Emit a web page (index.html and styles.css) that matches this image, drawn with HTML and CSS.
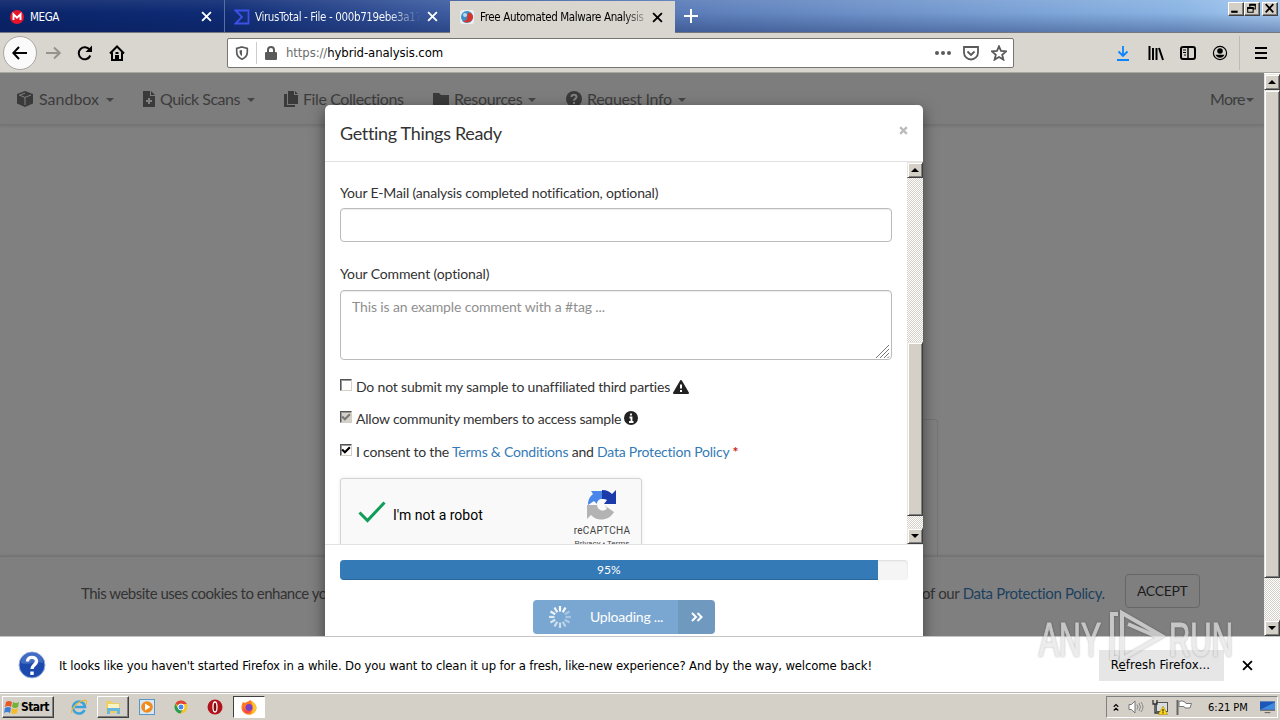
FILE: index.html
```
<!DOCTYPE html>
<html lang="en">
<head>
  <meta charset="UTF-8">
  <title>Free Automated Malware Analysis</title>
  <link rel="stylesheet" href="styles.css">
</head>
<body>

  <!-- Tabs -->
  <div class="tabbar">
    <div class="tab">
      <svg class="fav" viewBox="0 0 16 16"><circle cx="8" cy="8" r="7" fill="#e8142c"/><path d="M4.500 11V5.200L8 8.600l3.500-3.400V11" fill="none" stroke="#fff" stroke-width="1.900"/></svg>
      <span class="tab-title">MEGA</span>
      <svg class="tab-x" viewBox="0 0 10 10"><path d="M1 1l8 8M9 1L1 9"/></svg>
    </div>
    <div class="tab tab-vt">
      <svg class="fav" viewBox="0 0 16 16"><path d="M1.500 1.500h13v13h-13L8 8z" fill="none" stroke="#3d50e8" stroke-width="1.800"/></svg>
      <span class="tab-title fade-blue">VirusTotal - File - 000b719ebe3a17</span>
      <svg class="tab-x" viewBox="0 0 10 10"><path d="M1 1l8 8M9 1L1 9"/></svg>
    </div>
    <div class="tab active">
      <svg class="fav" viewBox="0 0 16 16"><rect x="1" y="1" width="14" height="14" rx="2" fill="#e9eef2"/><circle cx="8" cy="8" r="6" fill="#3f8fc4"/><path d="M9 4a4 4 0 0 1 5 4 6 6 0 0 1-10 4c3 0 5-2 4-4z" fill="#d8342c"/><circle cx="6" cy="6" r="2" fill="#b9def2"/></svg>
      <span class="tab-title fade-gray">Free Automated Malware Analysis</span>
      <svg class="tab-x" viewBox="0 0 10 10"><path d="M1 1l8 8M9 1L1 9"/></svg>
    </div>
    <svg class="plus" viewBox="0 0 14 14"><path d="M7 0v14M0 7h14"/></svg>
    <div class="win-btns">
      <div class="win-btn"><svg viewBox="0 0 12 10"><path d="M2 8h6" stroke-width="2"/></svg></div>
      <div class="win-btn"><svg viewBox="0 0 12 10"><path d="M4.500 4V1.500h5v4H8M2.500 4.500h5v4h-5z"/><path d="M4 1.500h6M2 4.500h6" stroke-width="2"/></svg></div>
      <div class="win-btn close"><svg viewBox="0 0 12 10"><path d="M2.500 1l7 7.500M9.500 1l-7 7.500" stroke-width="1.700"/></svg></div>
    </div>
  </div>

  <!-- Toolbar -->
  <div class="toolbar">
    <div class="back"><svg viewBox="0 0 16 16"><path d="M15 8H1.500M7 2L1.300 8 7 14"/></svg></div>
    <svg class="tool forward" viewBox="0 0 16 16"><path d="M1 8h13M9 2.500L14.700 8 9 13.500"/></svg>
    <svg class="tool" viewBox="0 0 16 16"><path d="M13.300 10.500a6 6 0 1 1-.5-5.500"/><path d="M15 .5V7H8.500z" fill="#000" stroke="none"/></svg>
    <svg class="tool home" viewBox="0 0 16 16"><path d="M1 8.500L8 1.500l7 7M3 7.500V15h10V7.500"/><path d="M7 15v-4h2v4M6.500 8h3"/></svg>
    <div class="urlbar">
      <svg class="shield" viewBox="0 0 14 14"><path d="M7 1l5.300 1.300V6c0 4-2.500 6-5.300 7.200C4.200 12 1.700 10 1.700 6V2.300z" fill="none" stroke="#5a5a5a" stroke-width="1.700"/><path d="M7 4v6C5 9 4.500 7.500 4.500 4.500z" fill="#5a5a5a"/></svg>
      <div class="url-sep"></div>
      <svg class="lock" viewBox="0 0 12 14"><path d="M3 7V4a3 3 0 0 1 6 0v3" fill="none" stroke="#5a5a5a" stroke-width="2"/><rect x="0" y="6" width="12" height="8" rx="1" fill="#5a5a5a"/></svg>
      <span class="url"><span>https://</span>hybrid-analysis.com</span>
      <svg class="dots" viewBox="0 0 16 4"><circle cx="2" cy="2" r="2"/><circle cx="8" cy="2" r="2"/><circle cx="14" cy="2" r="2"/></svg>
      <svg class="page-act" viewBox="0 0 16 16"><path d="M1 2h14v5.500a7 7 0 0 1-14 0z"/><path d="M4.500 6.500L8 10l3.500-3.500"/></svg>
      <svg class="page-act star" viewBox="0 0 16 16"><path d="M8 1.300l2 4.600 5 .5-3.800 3.300 1.200 4.900L8 12l-4.400 2.600 1.200-4.900L1 6.400l5-.5z"/></svg>
    </div>
    <div class="tools-right">
      <svg viewBox="0 0 16 16"><path d="M7 1v10M2.500 6.500L7 11l4.500-4.500M1 15h12" stroke="#0a84ff" stroke-width="1.800" fill="none"/></svg>
      <svg viewBox="0 0 16 16"><path d="M1.500 1v14M5 3v12M8.500 3v12M11 3l4 12" stroke="#000" stroke-width="2" fill="none"/></svg>
      <svg viewBox="0 0 16 16"><rect x="1" y="2" width="14" height="12" rx="2" stroke="#000" stroke-width="2" fill="none"/><path d="M8 2v12" stroke="#000" stroke-width="1.500"/><path d="M3 5h3M3 7.500h3M4 10h2" stroke="#000"/></svg>
      <svg viewBox="0 0 16 16"><circle cx="8" cy="8" r="6.600" fill="none" stroke="#000" stroke-width="1.200"/><circle cx="8" cy="6" r="2.800"/><path d="M3.500 9.800h9c-1 2-2.500 3-4.500 3s-3.500-1-4.500-3z"/></svg>
      <div class="tool-sep"></div>
      <svg class="burger" viewBox="0 0 12 12"><path d="M0 1h12M0 6h12M0 11h12" stroke="#000" stroke-width="2"/></svg>
    </div>
  </div>

  <!-- Page -->
  <div class="viewport">
    <div class="page">
      <nav class="site-nav">
        <div class="nav-item"><svg width="16" height="16" viewBox="0 0 16 16"><path d="M8 0l8 3v9.500L8 16l-8-3.500V3z"/><path d="M8 6.500V14M2 4l6 2.400L14 4M8 2.200L3 4" fill="none" stroke="#808080"/></svg><span class="nav-1">Sandbox</span><i class="caret"></i></div>
        <div class="nav-item"><svg width="12" height="16" viewBox="0 0 12 16"><path d="M0 0h7v5h5v11H0zM8 0l4 4H8z"/><path d="M6 7v6M3 10h6" stroke="#808080" stroke-width="2"/></svg><span class="nav-2">Quick Scans</span><i class="caret"></i></div>
        <div class="nav-item"><svg width="14" height="16" viewBox="0 0 14 16"><path d="M4 0h6v4h4v9H4zM11 0l3 3h-3zM0 3h3v11h8v2H0z"/></svg><span class="nav-3">File Collections</span></div>
        <div class="nav-item"><svg width="16" height="16" viewBox="0 0 16 16"><path d="M0 2h6l2 2h8v10H0z"/></svg><span class="nav-4">Resources</span><i class="caret"></i></div>
        <div class="nav-item"><svg width="16" height="16" viewBox="0 0 16 16"><circle cx="8" cy="8" r="8"/><path d="M5.500 6c0-3 5-3 5 0 0 1.500-2.500 1.800-2.500 3.800M8 11v2" fill="none" stroke="#808080" stroke-width="2"/></svg><span class="nav-5">Request Info</span><i class="caret"></i></div>
        <div class="nav-item more"><span>More</span><i class="caret"></i></div>
      </nav>
      <div class="panel"></div>
      <div class="cookies">
        <span class="cookie-text">This website uses cookies to enhance your</span>
        <span class="cookie-end">of our <a>Data Protection Policy.</a></span>
        <button class="accept">ACCEPT</button>
      </div>
    </div>
    <div class="scrollbar main-scroll">
      <div class="sb-btn"><i class="up"></i></div>
      <div class="sb-thumb"></div>
      <div class="sb-track"></div>
      <div class="sb-btn"><i class="down"></i></div>
    </div>

    <div class="modal">
      <div class="modal-header">
        <h4>Getting Things Ready</h4>
        <svg class="modal-close" viewBox="0 0 8 8"><path d="M1 1l6 6M7 1L1 7"/></svg>
      </div>
      <div class="modal-body">
        <form class="form">
          <label class="email-label">Your E-Mail (analysis completed notification, optional)</label>
          <div class="input"></div>
          <label>Your Comment (optional)</label>
          <div class="textarea">This is an example comment with a #tag ...
            <svg class="grip" viewBox="0 0 14 13"><path d="M0 13L13 0M4 13l9-9M8 13l5-5M11.500 13l1.500-1.500"/></svg>
          </div>
          <div class="check-row">
            <div class="box"></div><span class="t1">Do not submit my sample to unaffiliated third parties</span>
            <svg class="warn" viewBox="0 0 16 14"><path d="M8 1l7 12H1z" stroke="#222" stroke-width="2" stroke-linejoin="round"/><path d="M8 4.500v4M8 10v2" stroke="#fff" stroke-width="2"/></svg>
          </div>
          <div class="check-row second">
            <div class="box disabled"><svg viewBox="0 0 9 9"><path d="M1 4l2.500 2.500L8 2" stroke="#777"/></svg></div><span class="t2">Allow community members to access sample</span>
            <svg class="info" viewBox="0 0 14 14"><circle cx="7" cy="7" r="7"/><path d="M7 2.500v2M5.500 6.500h2V11M5 11h4.500" fill="none" stroke="#fff" stroke-width="1.800"/></svg>
          </div>
          <div class="check-row third">
            <div class="box"><svg viewBox="0 0 9 9"><path d="M1 4l2.500 2.500L8 2" stroke="#000"/></svg></div><span class="t3">I consent to the <a>Terms &amp; Conditions</a> and <a>Data Protection Policy</a> <b>*</b></span>
          </div>
          <div class="captcha">
            <svg class="tick" viewBox="0 0 28 22"><path d="M1.500 11.500l8 8L26.500 1.500"/></svg>
            <span class="robot">I'm not a robot</span>
            <div class="captcha-brand">
              <svg viewBox="0 0 32 32"><path d="M5 2h11v8c-3 0-5 2-5 5L8 12l-6 4c0-4 1-8 5-11z" fill="#4a86ea"/><path d="M16 1c5 0 8 2 10 4l4-4v14H18l3-4c-1-1-3-1-5-1z" fill="#1c3bab"/><path d="M1 16l10 0c0 5 7 8 10 3l-3-3 10 7c-5 9-17 10-23 3l-4 4z" fill="#b3b3b3"/></svg>
              <span class="rc">reCAPTCHA</span>
              <span class="pt">Privacy • Terms</span>
            </div>
          </div>
        </form>
        <div class="scrollbar modal-scroll">
          <div class="sb-btn"><i class="up"></i></div>
          <div class="sb-track"></div>
          <div class="sb-thumb"></div>
          <div class="sb-track end"></div>
          <div class="sb-btn"><i class="down"></i></div>
        </div>
      </div>
      <div class="modal-footer">
        <div class="progress"><div class="progress-bar" style="width: 94.8%"></div><span>95%</span></div>
        <div class="upload">
          <div class="upload-main">
            <svg viewBox="-12 -12 24 24"><g stroke="#fff" stroke-width="2.200"><path d="M0-5.500V-11"/><path d="M0-5.500V-11" transform="rotate(30)" opacity=".95"/><path d="M0-5.500V-11" transform="rotate(60)" opacity=".35"/><path d="M0-5.500V-11" transform="rotate(90)" opacity=".35"/><path d="M0-5.500V-11" transform="rotate(120)" opacity=".4"/><path d="M0-5.500V-11" transform="rotate(150)" opacity=".5"/><path d="M0-5.500V-11" transform="rotate(180)" opacity=".6"/><path d="M0-5.500V-11" transform="rotate(210)" opacity=".65"/><path d="M0-5.500V-11" transform="rotate(240)" opacity=".7"/><path d="M0-5.500V-11" transform="rotate(270)" opacity=".75"/><path d="M0-5.500V-11" transform="rotate(300)" opacity=".85"/><path d="M0-5.500V-11" transform="rotate(330)" opacity=".9"/></g></svg>
            <span>Uploading ...</span>
          </div>
          <div class="upload-next"><svg viewBox="0 0 12 10"><path d="M1 1l4 4-4 4M6.500 1l4 4-4 4"/></svg></div>
        </div>
      </div>
    </div>
  </div>

  <!-- Notification bar -->
  <div class="notice">
    <svg class="q" viewBox="0 0 28 28"><circle cx="14" cy="14" r="13" fill="#1c49ad" stroke="#9fb4dd"/><path d="M3 12a11 11 0 0 1 22 0c-6-3-15 3-22 0z" fill="#5b83d0" opacity=".6"/><path d="M9.500 10.500c0-5.500 9-5.500 9 0 0 3-4.500 3.500-4.500 7.500M14 20.500v3.500" fill="none" stroke="#fff" stroke-width="3.400"/></svg>
    <span class="notice-text">It looks like you haven't started Firefox in a while. Do you want to clean it up for a fresh, like-new experience? And by the way, welcome back!</span>
    <button class="refresh">R<u>e</u>fresh Firefox...</button>
    <svg class="notice-x" viewBox="0 0 10 10"><path d="M1 1l8 8M9 1L1 9"/></svg>
  </div>

  <!-- Taskbar -->
  <div class="taskbar">
    <div class="start">
      <svg viewBox="0 0 16 16"><path d="M2 3q3-2 6 0L7 8Q4 6 1 8z" fill="#e8572a"/><path d="M9 3q3 2 6 0l-1 5q-3 2-6 0z" fill="#6fb33a"/><path d="M1 9q3-2 6 0l-1 5Q3 12 0 14z" fill="#3e7fd6"/><path d="M8 9q3 2 6 0l-1 5q-3 2-6 0z" fill="#f4bd2c"/></svg>
      <span>Start</span>
    </div>
    <div class="task"><svg viewBox="0 0 16 16"><path d="M13.500 11A6 6 0 1 1 14 8H4" fill="none" stroke="#39a2dd" stroke-width="2.600"/><path d="M1 14C-1 10 9 0 15 1.500q1.500 1 0 4" fill="none" stroke="#e9b93c" stroke-width="1.300"/></svg></div>
    <div class="task raised"><svg viewBox="0 0 16 16"><path d="M1 2h6l1 2h7v10H1z" fill="#eccf68"/><path d="M3 5h11v5H3z" fill="#fbf3c4"/><path d="M2 9h13v6h-3v-3H5v3H2z" fill="#69b7df"/></svg></div>
    <div class="task"><svg viewBox="0 0 16 16"><rect x=".5" y=".5" width="15" height="15" fill="#d6e8f5" stroke="#5996c6"/><circle cx="8" cy="8" r="5.800" fill="#f28a1c"/><path d="M6 4.500l5.500 3.500L6 11.500z" fill="#fff"/></svg></div>
    <div class="task"><svg viewBox="0 0 16 16"><circle cx="8" cy="8" r="6.500" fill="#f5c62c"/><path d="M8 8L2.400 4.700A6.500 6.500 0 0 1 13.800 5H8z" fill="#dd4336"/><path d="M2.400 4.700A6.500 6.500 0 0 0 7.500 14.500L10 10 5.200 9.500z" fill="#289d58"/><circle cx="8" cy="8" r="3" fill="#4a87ea" stroke="#fff"/></svg></div>
    <div class="task"><svg viewBox="0 0 16 16"><circle cx="8" cy="8" r="7.500" fill="#b3121a"/><ellipse cx="8" cy="8" rx="2" ry="5" fill="#7c0b10" stroke="#fff" stroke-width="1.300"/></svg></div>
    <div class="task pressed"><svg viewBox="0 0 16 16"><path d="M2 3l2 1c2-2 4-1 5-3 3 2 6 4 6.500 7.500a7.500 7 0 0 1-15 .5C.5 6 1 5 2 3z" fill="#ff7a22"/><path d="M10 2c4 2 6 5 5 9q-2 4-6 5 5-5 1-14z" fill="#ffc52e"/><circle cx="8" cy="8.500" r="3.500" fill="#7a40c8"/><path d="M2 8c2 5 6 5 8 3-1 5-8 4-8-3z" fill="#f33f52"/></svg></div>
    <div class="tray">
      <svg class="chev" viewBox="0 0 8 10"><path d="M1 4l3-3 3 3M1 9l3-3 3 3"/></svg>
      <svg viewBox="0 0 16 16"><path d="M1 5.500h2.500L7 2v12l-3.500-3.500H1z" fill="#fff" stroke="#777"/><path d="M9 5.500q2 2.500 0 5M11 4q3 4 0 8M13 3q4 5 0 10" fill="none" stroke="#888"/></svg>
      <svg viewBox="0 0 16 16"><rect x="4.500" y="3.500" width="11" height="9" fill="#d8dde0" stroke="#555"/><path d="M1 1v4h4V1M3 5v9h4" fill="none" stroke="#333" stroke-width="1.300"/><path d="M11 7l4.500 8.500h-9z" fill="#ffd91c" stroke="#a98a00" stroke-width=".6"/><path d="M11 10v2.500M11 13.200v1.200" stroke="#000"/></svg>
      <svg viewBox="0 0 16 16"><path d="M1.500 1v15" stroke="#666" stroke-width="2"/><path d="M3 2.500q3-1.500 6 .5l1 1.500h5.500L14 9H9L8 7.500H3z" fill="#fff" stroke="#777"/></svg>
      <span>6:21 PM</span>
      <svg class="desk" viewBox="0 0 16 14"><path d="M0 1h16v9H0z" fill="#1d57b5"/><path d="M0 10l16-8v8z" fill="#3f8be0"/><path d="M0 10.500h16M5 13h6" stroke="#555"/></svg>
    </div>
  </div>

  <!-- Watermark -->
  <svg class="watermark" viewBox="0 0 200 60">
    <g class="wm-text"><text x="1" y="47" textLength="62" lengthAdjust="spacingAndGlyphs">ANY</text><text x="131" y="47" textLength="64" lengthAdjust="spacingAndGlyphs">RUN</text></g>
    <path class="wm-line" d="M80 5h-6v44h6M84 4l40 23-40 23zM90 15l32 14"/>
  </svg>

</body>
</html>
```
FILE: styles.css
```
* {
  box-sizing: border-box;
}

body {
  margin: 0;
  width: 1280px;
  height: 720px;
  overflow: hidden;
  position: relative;
  display: flex;
  flex-direction: column;
  font-family: "DejaVu Sans Condensed", "DejaVu Sans", sans-serif;
  font-stretch: condensed;
  font-size: 11px;
  color: #000;
}

svg {
  display: block;
  flex-shrink: 0;
}

span {
  white-space: nowrap;
}

/* Tabs */
.tabbar {
  height: 33px;
  display: flex;
  background: linear-gradient(rgba(255,255,255,.08), rgba(0,0,0,0) 40%, rgba(10,25,80,.32)), linear-gradient(90deg, #0a246a 0, #0e2b74 220px, #3c5b9f 440px, #5c7db9 690px, #8ab4e3 1180px, #a6caf0);
  border-bottom: 1px solid #74777f;
}

.tab {
  width: 225px;
  display: flex;
  align-items: center;
  padding: 1px 12px 0 9px;
  color: #fff;
  border-right: 1px solid #58709f;
}

.tab-vt {
  border-right: none;
}

.fav {
  width: 16px;
  height: 16px;
  margin-right: 5px;
}

.tab-title {
  font-size: 11.5px;
  letter-spacing: -0.37px;
  width: 167px;
  overflow: hidden;
}

.fade-blue {
  background: linear-gradient(90deg, #fff 80%, #2c4b91);
  background-clip: text;
  color: transparent;
}

.fade-gray {
  background: linear-gradient(90deg, #000 86%, #c0bdb7);
  background-clip: text;
  color: transparent;
}

.tab-x {
  width: 11px;
  height: 11px;
  margin-left: auto;
  fill: none;
  stroke: currentColor;
  stroke-width: 1.7;
}

.active {
  height: 33px;
  margin-top: 1px;
  background: #d9d6cf;
  color: #000;
  border: none;
  padding-bottom: 2px;
}

.plus {
  width: 14px;
  height: 14px;
  margin: 9px 0 0 9px;
  stroke: #fff;
  stroke-width: 2;
}

.win-btns {
  display: flex;
  margin: 2px 2px 0 auto;
}

.win-btn {
  width: 16px;
  height: 14px;
  background: #d4d0c8;
  border: 1px solid;
  border-color: #fff #404040 #404040 #fff;
  box-shadow: inset -1px -1px #808080;
}

.win-btn svg {
  width: 13px;
  height: 11px;
  fill: none;
  stroke: #000;
}

.close {
  margin-left: 2px;
}

/* Toolbar */
.toolbar {
  height: 40px;
  display: flex;
  align-items: center;
  background: #d9d6cf;
  padding-left: 3px;
  border-bottom: 1px solid #aaa7a0;
}

.back {
  width: 34px;
  height: 34px;
  border: 1px solid #a9a6a1;
  border-radius: 50%;
  background: #fafafa;
  display: flex;
  align-items: center;
  justify-content: center;
}

.back svg,
.tool {
  width: 16px;
  height: 16px;
  fill: none;
  stroke: #000;
  stroke-width: 2;
}

.tool {
  margin-left: 16px;
}

.forward {
  margin-left: 8px;
  stroke: #96938e;
}

.urlbar {
  width: 787px;
  height: 30px;
  margin-left: 102px;
  background: #fff;
  border: 1px solid #77756f;
  border-radius: 2px;
  display: flex;
  align-items: center;
  padding: 0 6px 0 7px;
}

.shield {
  width: 14px;
  height: 14px;
}

.url-sep {
  width: 1px;
  height: 22px;
  background: #ccc;
  margin: 0 8px 0 7px;
}

.lock {
  width: 12px;
  height: 14px;
}

.url {
  margin-left: 9px;
  font-size: 13px;
  letter-spacing: -0.09px;
}

.url span {
  color: #6d6d6d;
}

.dots {
  width: 16px;
  height: 4px;
  margin-left: auto;
  fill: #5a5a5a;
}

.page-act {
  width: 16px;
  height: 16px;
  margin-left: 12px;
  fill: none;
  stroke: #5a5a5a;
  stroke-width: 1.8;
}

.tools-right {
  flex: 1;
  display: flex;
  align-items: center;
  gap: 16px;
  padding-left: 102px;
}

.tools-right svg {
  width: 16px;
  height: 16px;
}

.tool-sep {
  width: 1px;
  height: 34px;
  background: #bebab4;
  margin-left: -5px;
}

.tools-right .burger {
  width: 12px;
  height: 12px;
  margin-left: -1px;
}

/* Page */
.viewport {
  height: 563px;
  position: relative;
  display: flex;
  overflow: hidden;
  font-family: Lato, sans-serif;
  font-stretch: normal;
  font-size: 14px;
}

.page {
  width: 1264px;
  background: #808080;
  display: flex;
  flex-direction: column;
  color: #333;
}

.site-nav {
  height: 52px;
  display: grid;
  grid-template-columns: 126px 141px 149px 133px 644px 1fr;
  padding-left: 17px;
  background: #7d7d7d;
  border-bottom: 1px solid #747474;
  box-shadow: 0 1px 3px rgba(0,0,0,.12);
  font-size: 16px;
}

.nav-item {
  display: flex;
  align-items: center;
  color: #3c3c3c;
}

.nav-item svg {
  fill: #3a3a3a;
  margin-right: 5px;
}

.nav-item .nav-1 {
  margin-left: 1px;
  letter-spacing: 0;
}

.nav-2 {
  letter-spacing: -0.5px;
}

.nav-3 {
  letter-spacing: -0.4px;
}

.nav-4,
.nav-5 {
  letter-spacing: -0.32px;
}

.more {
  letter-spacing: -0.7px;
}

.caret {
  border: 4px solid transparent;
  border-top-color: #444;
  border-bottom: none;
  margin: 3px 0 0 7px;
}

.nav-4 + .caret,
.nav-5 + .caret {
  margin-left: 6px;
}

.more .caret {
  margin-left: 1px;
}

.panel {
  width: 598px;
  height: 137px;
  margin: 294px 0 0 340px;
  border: 1px solid #747474;
  border-bottom: none;
  border-radius: 4px 4px 0 0;
}

.cookies {
  flex: 1;
  display: flex;
  align-items: flex-start;
  background: #7f7f7f;
  border-top: 1px solid #737373;
  box-shadow: 0 -1px 2px rgba(0,0,0,.1);
  padding: 17px 0 0 81px;
  font-size: 15px;
}

.cookie-text {
  width: 700px;
  padding-top: 10px;
  letter-spacing: -0.5px;
}

.cookie-end {
  padding-top: 10px;
  margin-left: 141px;
  letter-spacing: -0.34px;
}

.cookie-end a {
  color: #1c3f5f;
}

.accept {
  width: 75px;
  height: 34px;
  margin-left: 20px;
  padding: 0 0 2px;
  border: 1px solid #666;
  border-radius: 4px;
  background: transparent;
  font: 14px Lato, sans-serif;
  letter-spacing: -0.3px;
  color: #1c1c1c;
}

/* Classic scrollbars */
.scrollbar {
  width: 16px;
  display: flex;
  flex-direction: column;
}

.sb-btn,
.sb-thumb {
  background: #d4d0c8;
  border: 1px solid;
  border-color: #e8e5df #404040 #404040 #e8e5df;
  box-shadow: inset 1px 1px #fff, inset -1px -1px #808080;
}

.sb-btn {
  height: 16px;
  display: flex;
  align-items: center;
  justify-content: center;
}

.up {
  border: 4px solid transparent;
  border-bottom-color: #000;
  border-top: none;
}

.down {
  border: 4px solid transparent;
  border-top-color: #000;
  border-bottom: none;
}

.sb-track {
  flex: 1;
  background: repeating-conic-gradient(#fff 0 25%, #d4d0c8 0 50%) 0 0 / 2px 2px;
}

.main-scroll {
  padding-top: 1px;
}

.main-scroll .sb-thumb {
  height: 488px;
}

/* Modal */
.modal {
  position: absolute;
  left: 325px;
  top: 32px;
  width: 598px;
  height: 560px;
  background: #fff;
  border-radius: 5px;
  box-shadow: 0 5px 15px rgba(0,0,0,.5);
  color: #333;
}

.modal-header {
  height: 57px;
  display: flex;
  justify-content: space-between;
  padding: 17px 15px 0;
  border-bottom: 1px solid #e2e2e2;
}

.modal-header h4 {
  margin: 0;
  font-size: 18px;
  font-weight: normal;
  line-height: 22px;
  letter-spacing: -0.33px;
}

.modal-close {
  width: 9px;
  height: 9px;
  margin-top: 4px;
  stroke: #bbb;
  stroke-width: 2;
}

.modal-body {
  height: 383px;
  display: flex;
  overflow: hidden;
  border-bottom: 1px solid #e2e2e2;
}

.form {
  width: 582px;
  padding: 21px 15px 0;
}

.form label {
  display: block;
  line-height: 20px;
  letter-spacing: -0.13px;
}

.form .email-label {
  letter-spacing: -0.18px;
}

.input {
  height: 34px;
  margin: 5px 0 22px;
  border: 1px solid #bbb;
  border-radius: 4px;
  box-shadow: inset 0 1px 1px rgba(0,0,0,.075);
}

.textarea {
  position: relative;
  height: 70px;
  margin-top: 6px;
  padding: 6px 11px;
  border: 1px solid #bbb;
  border-radius: 4px;
  box-shadow: inset 0 1px 1px rgba(0,0,0,.075);
  line-height: 20px;
  letter-spacing: -0.13px;
  color: #8f8f8f;
}

.grip {
  position: absolute;
  right: 1px;
  bottom: 1px;
  width: 14px;
  height: 13px;
  stroke: #777;
}

.check-row {
  height: 20px;
  margin-top: 17px;
  display: flex;
  align-items: center;
  line-height: 20px;
}

.second {
  margin-top: 12px;
}

.third {
  margin-top: 13px;
}

.box {
  width: 12px;
  height: 12px;
  margin: 0 4px 4px 0;
  border: 1px solid;
  border-color: #555 #d4d0c8 #d4d0c8 #555;
  box-shadow: inset 1px 1px #999;
}

.box svg {
  width: 10px;
  height: 10px;
  fill: none;
  stroke-width: 2;
}

.disabled {
  background: #d4d0c8;
}

.t1 {
  letter-spacing: -0.18px;
}

.t2 {
  letter-spacing: -0.2px;
}

.t3 {
  letter-spacing: -0.21px;
}

.t3 a {
  color: #337ab7;
}

.t3 b {
  color: #d02020;
}

.warn {
  width: 16px;
  height: 14px;
  margin-left: 3px;
  fill: #222;
}

.info {
  width: 14px;
  height: 14px;
  margin: 0 0 2px 3px;
  fill: #222;
}

.captcha {
  width: 302px;
  height: 76px;
  margin-top: 16px;
  padding-left: 17px;
  display: flex;
  background: #f9f9f9;
  border: 1px solid #d3d3d3;
  border-radius: 3px;
  box-shadow: 0 0 4px rgba(0,0,0,.08);
}

.tick {
  width: 28px;
  height: 22px;
  margin-top: 22px;
  fill: none;
  stroke: #0f9d58;
  stroke-width: 3;
}

.robot {
  margin: 27px 0 0 7px;
  font: 14px/18px Roboto, sans-serif;
  color: #000;
}

.captcha-brand {
  width: 62px;
  margin: 10px 8px 0 auto;
  display: flex;
  flex-direction: column;
  align-items: center;
  font-family: Roboto, sans-serif;
  color: #444;
}

.captcha-brand svg {
  width: 32px;
  height: 32px;
}

.rc {
  font-size: 10px;
  line-height: 12px;
  letter-spacing: 0.3px;
  margin-top: 4px;
}

.pt {
  font-size: 8px;
  line-height: 10px;
  margin-top: 2px;
}

.modal-scroll .sb-track {
  flex: 0 0 164px;
}

.modal-scroll .sb-thumb {
  height: 174px;
}

.modal-scroll .end {
  flex: 1;
}

.modal-footer {
  padding: 15px;
}

.progress {
  position: relative;
  height: 20px;
  background: #f5f5f5;
  border-radius: 4px;
  overflow: hidden;
  box-shadow: inset 0 1px 2px rgba(0,0,0,.1);
}

.progress-bar {
  height: 20px;
  background: #337ab7;
  box-shadow: inset 0 -1px rgba(0,0,0,.15);
}

.progress span {
  position: absolute;
  left: 257px;
  top: 0;
  font-size: 12px;
  line-height: 20px;
  color: #fff;
}

.upload {
  width: 182px;
  height: 34px;
  margin: 20px 0 0 193px;
  display: flex;
  border-radius: 4px;
  overflow: hidden;
  color: #fff;
}

.upload-main {
  width: 145px;
  display: flex;
  align-items: center;
  padding-left: 15px;
  background: #7aa7d1;
  letter-spacing: -0.22px;
}

.upload-main svg {
  width: 24px;
  height: 24px;
  margin-right: 18px;
}

.upload-main span {
  padding-bottom: 2px;
}

.upload-next {
  flex: 1;
  display: flex;
  align-items: center;
  justify-content: center;
  background: #7099c0;
}

.upload-next svg {
  width: 12px;
  height: 10px;
  fill: none;
  stroke: #fff;
  stroke-width: 2;
}

/* Notification bar */
.notice {
  height: 56px;
  display: flex;
  align-items: center;
  background: #fff;
  border-top: 1px solid #c4c4c4;
  padding: 1px 0 0 18px;
}

.q {
  width: 28px;
  height: 28px;
  margin-right: 13px;
}

.notice-text {
  font-size: 13px;
  letter-spacing: -0.14px;
}

.refresh {
  width: 125px;
  height: 31px;
  margin-left: auto;
  padding: 0 2px 2px 0;
  border: none;
  background: #e6e6e6;
  font: 13px "DejaVu Sans Condensed", "DejaVu Sans", sans-serif;
  font-stretch: condensed;
  letter-spacing: 0.1px;
}

.notice-x {
  width: 11px;
  height: 11px;
  margin: 0 27px 0 18px;
  stroke: #000;
  stroke-width: 1.7;
}

/* Taskbar */
.taskbar {
  height: 28px;
  display: flex;
  align-items: center;
  background: #d4d0c8;
  border-top: 1px solid #bab7b0;
  box-shadow: inset 0 1px #fff;
  padding: 1px 2px 0;
}

.start {
  width: 52px;
  height: 22px;
  display: flex;
  align-items: center;
  border: 1px solid;
  border-color: #fff #404040 #404040 #fff;
  box-shadow: inset -1px -1px #808080;
  font-size: 12px;
  font-weight: bold;
  letter-spacing: -0.6px;
  margin-right: 9px;
  padding-left: 1px;
}

.start svg {
  width: 16px;
  height: 16px;
  margin-right: 1px;
}

.task {
  width: 32px;
  height: 22px;
  margin-right: 2px;
  display: flex;
  align-items: center;
  justify-content: center;
}

.task svg {
  width: 16px;
  height: 16px;
}

.raised {
  border: 1px solid;
  border-color: #fff #404040 #404040 #fff;
  box-shadow: inset -1px -1px #808080;
}

.pressed {
  background: #fff;
  border: 1px solid;
  border-color: #404040 #fff #fff #404040;
}

.tray {
  width: 172px;
  height: 22px;
  margin-left: auto;
  display: flex;
  align-items: center;
  gap: 8px;
  padding-left: 6px;
  border: 1px solid;
  border-color: #808080 #fff #fff #808080;
}

.tray svg {
  width: 16px;
  height: 16px;
}

.tray .chev {
  width: 6px;
  height: 9px;
  margin-right: 1px;
  fill: none;
  stroke: #000;
  stroke-width: 1.5;
}

.tray span {
  margin-left: 8px;
}

.tray .desk {
  width: 15px;
  height: 14px;
  margin-left: 4px;
}

/* Watermark */
.watermark {
  position: absolute;
  left: 1038px;
  top: 609px;
  width: 200px;
  height: 60px;
  filter: drop-shadow(0 0 1px rgba(0,0,0,.4));
  opacity: .7;
}

.wm-text {
  font: 48px "Liberation Sans", sans-serif;
  fill: #e4e4e4;
  stroke: #e4e4e4;
  stroke-width: 1.2;
}

.wm-line {
  fill: none;
  stroke: #e4e4e4;
  stroke-width: 4;
}
```
